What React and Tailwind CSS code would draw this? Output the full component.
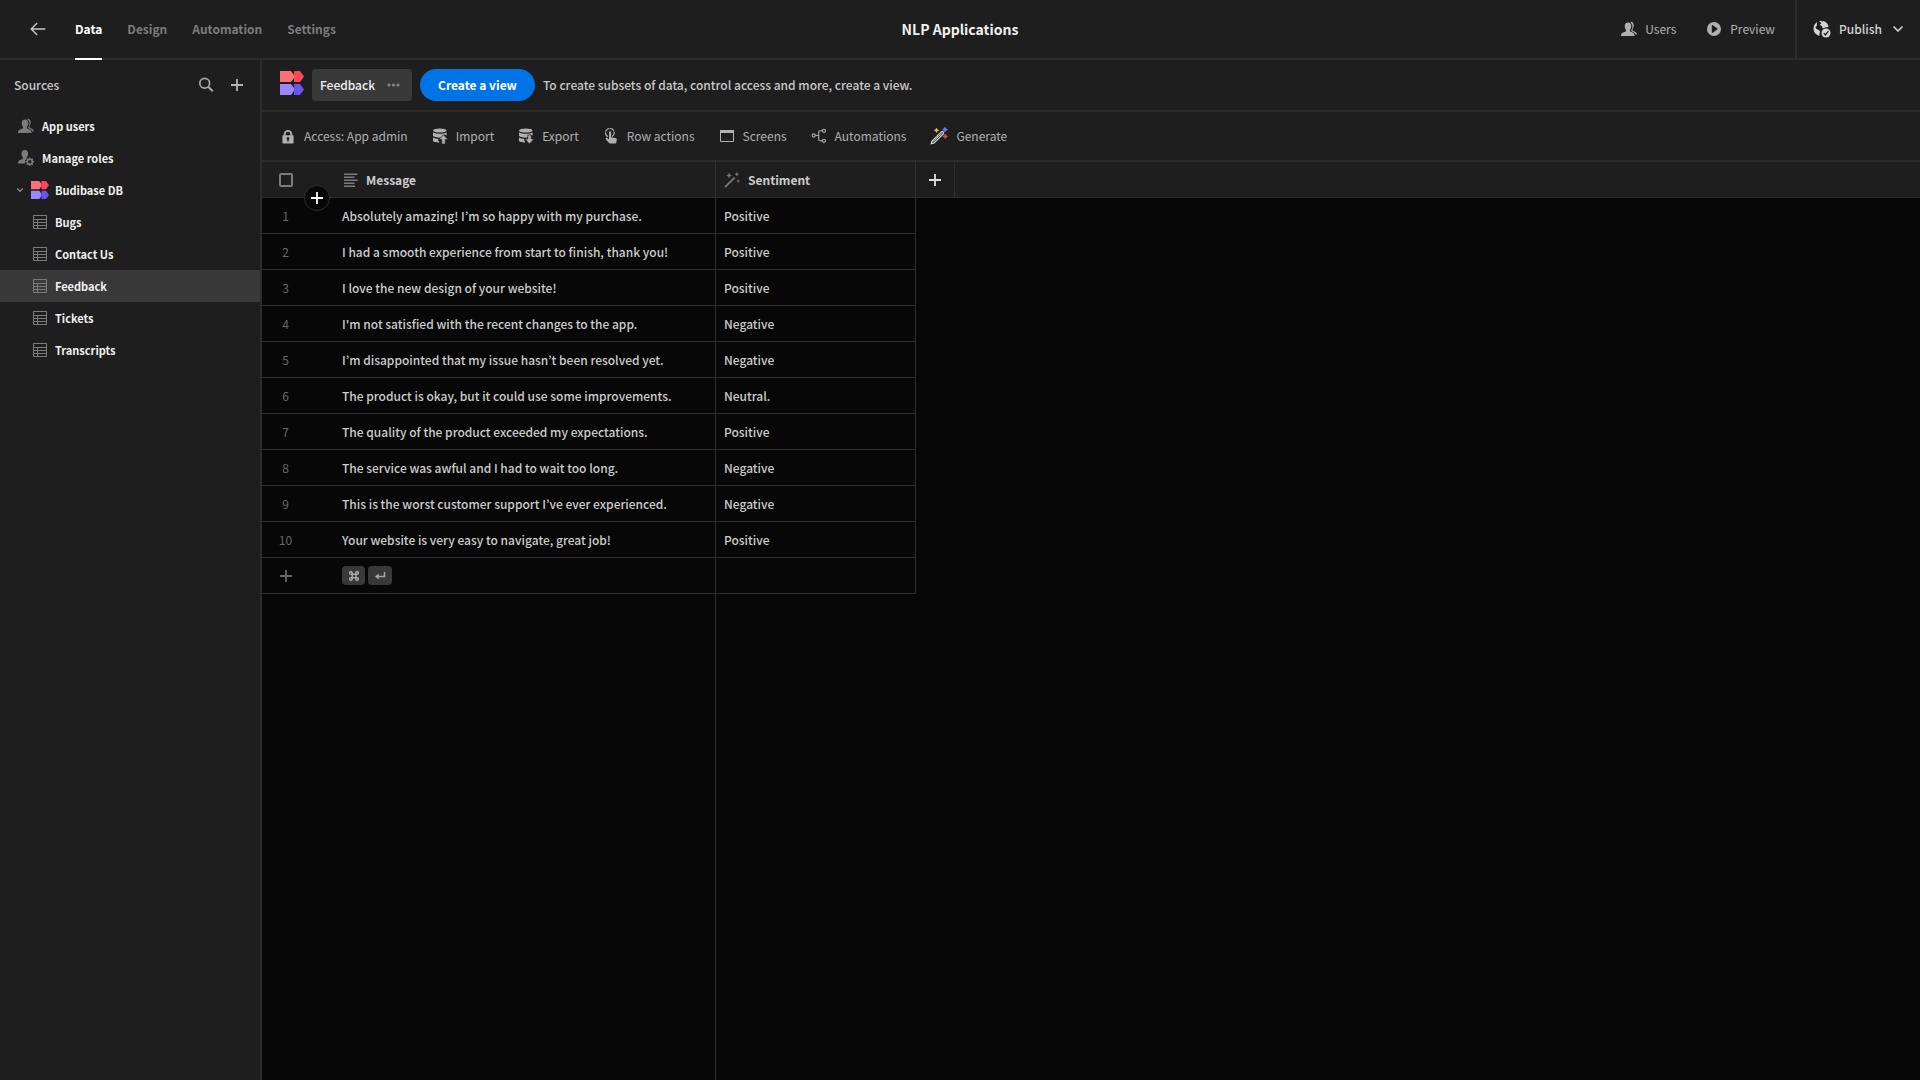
import { FiChevronDown } from "react-icons/fi";

const tabs = [
    { name: "Data", active: true },
    { name: "Design" },
    { name: "Automation" },
    { name: "Settings" }
];

const tables = [
    { name: "Bugs" },
    { name: "Contact Us" },
    { name: "Feedback", selected: true },
    { name: "Tickets" },
    { name: "Transcripts" }
];

const rows = [
    { message: "Absolutely amazing! I’m so happy with my purchase.", sentiment: "Positive" },
    { message: "I had a smooth experience from start to finish, thank you!", sentiment: "Positive" },
    { message: "I love the new design of your website!", sentiment: "Positive" },
    { message: "I'm not satisfied with the recent changes to the app.", sentiment: "Negative" },
    { message: "I’m disappointed that my issue hasn’t been resolved yet.", sentiment: "Negative" },
    { message: "The product is okay, but it could use some improvements.", sentiment: "Neutral." },
    { message: "The quality of the product exceeded my expectations.", sentiment: "Positive" },
    { message: "The service was awful and I had to wait too long.", sentiment: "Negative" },
    { message: "This is the worst customer support I’ve ever experienced.", sentiment: "Negative" },
    { message: "Your website is very easy to navigate, great job!", sentiment: "Positive" }
];

const Logo = ({ className }) => (
    <svg viewBox="0 0 24 24" className={className} aria-hidden="true">
        <path d="M0 0h11l3 4v3l-3 4H0z" fill="#ff6f76" />
        <path d="M14 0h6l4 5.500L20 11h-6z" fill="#fb4756" />
        <path d="M0 13h11l3 4v3l-3 4H0z" fill="#9b87fa" />
        <path d="M14 13h6l4 5.500L20 24h-6z" fill="#6a55ee" />
    </svg>
);

const BackIcon = () => (
    <svg viewBox="0 0 16 14" className="w-4 h-3.5" fill="none" stroke="currentColor" strokeWidth="1.400">
        <path d="M15.300 7H1.200M7.200 1L1.200 7l6 6" />
    </svg>
);

const SearchIcon = () => (
    <svg viewBox="0 0 16 16" className="w-4 h-4" fill="none" stroke="currentColor" strokeWidth="1.700">
        <circle cx="6.700" cy="6.200" r="4.900" />
        <path d="M10.200 9.700l4.600 4.600" strokeWidth="2" />
    </svg>
);

const PlusIcon = ({ className }) => (
    <svg viewBox="0 0 12 12" className={className} fill="currentColor">
        <path d="M5.100 0h1.800v5.100H12v1.800H6.900V12H5.100V6.900H0V5.100h5.100z" />
    </svg>
);

const UsersIcon = () => (
    <svg viewBox="0 0 16 16" className="w-4 h-4 shrink-0" fill="currentColor">
        <path d="M7 1.500c2.200 0 3.300 1.700 3.300 3.800 0 1.500-.6 2.700-1.300 3.500v1.300c0 .4.300.6.700.7 2.200.6 3.800 1.500 3.800 3.500v.6H0v-.6c0-2 1.900-2.900 4.200-3.500.4-.1.700-.3.700-.7V8.800C4.200 8 3.700 6.800 3.700 5.300 3.700 3.200 4.800 1.500 7 1.500z" />
        <path d="M9 .9c2.400-.5 3.700 1.100 3.700 3.600 0 1.500-.5 2.600-1.200 3.400v1.200c0 .4.200.6.700.8 2 .6 3.500 1.400 3.800 3.500h-1.500c-.5-1.600-1.800-2.400-3.700-3-.4-.1-.7-.4-.7-.8 1-1.200 1.300-2.500 1.300-4C11.400 3.600 10.600 1.800 9 .9z" />
    </svg>
);

const RolesIcon = () => (
    <svg viewBox="0 0 16 16" className="w-4 h-4 shrink-0" fill="currentColor">
        <path d="M6.800 0C9 0 10.100 1.700 10.100 3.700c0 1.500-.6 2.600-1.300 3.400v1.200c-1 .9-1.800 2-1.800 3.700 0 .6.100 1 .3 1.500H0V13c0-2.100 1.900-3.100 4.100-3.700.4-.1.700-.3.700-.7V7.100c-.7-.8-1.300-1.900-1.300-3.400C3.500 1.700 4.600 0 6.800 0z" />
        <circle cx="11.800" cy="11.800" r="2.500" fill="none" stroke="currentColor" strokeWidth="1.500" />
        <path d="M11.800 7.600v1.800M11.800 14.200V16M7.600 11.800h1.800M14.200 11.800H16M8.800 8.800l1.300 1.300M13.500 13.500l1.300 1.300M14.800 8.800l-1.300 1.300M10.100 13.500l-1.300 1.300" stroke="currentColor" strokeWidth="1.400" />
    </svg>
);

const TableIcon = () => (
    <svg viewBox="0 0 14 14" className="w-3.5 h-3.5 shrink-0" fill="none" stroke="currentColor">
        <path d="M.5.5h13v13H.5zM.5 4.500h13M.5 7.500h13M.5 10.500h13M4.500 4.500v9" />
    </svg>
);

const PreviewIcon = () => (
    <svg viewBox="0 0 16 16" className="w-4 h-4" fill="currentColor" fillRule="evenodd">
        <path d="M8 1a7 7 0 100 14A7 7 0 008 1zM5.800 4.400c0-.4.300-.5.600-.3l5.100 3.500c.3.200.3.500 0 .7l-5.100 3.600c-.3.200-.6.100-.6-.3z" />
    </svg>
);

const PublishIcon = () => (
    <svg viewBox="0 0 18 18" className="w-4.5 h-4.5">
        <path fill="currentColor" d="M4.200 2.100C1.900 3.400.5 5.800.5 8.500c0 3.600 2.500 6.600 6.100 7.300 0-1.600-.3-2.400.3-3.500.4-.9-.4-1.600-1.300-2.300-1.100-.8-2.700-1-3-2.300-.2-.9.6-1.200 1.100-1.700.6-.6 0-1.400.2-2.100z" />
        <path fill="currentColor" d="M6.200 1.300l2.200-.8c-.2.700.2 1 .9.900l1.300-.5c2.700.8 4.700 3.300 5 6.100l-2.500.3c-1.500.2-2.200 1.400-3.400.8-1-.5-.2-1.600-1-2.200-.7-.5-1.900-.4-1.900-1.300 0-.8 1.300-.7 1.500-1.400.1-.7-1.300-.7-2.100-1.900z" />
        <circle cx="13" cy="13" r="4.500" fill="currentColor" />
        <path d="M10.700 13.100l1.700 1.800 3-3.700" fill="none" stroke="#1e1e1e" strokeWidth="1.300" />
    </svg>
);

const LockIcon = () => (
    <svg viewBox="0 0 16 16" className="w-4 h-4" fill="currentColor" fillRule="evenodd">
        <path d="M13 7.300h-.7V6.200a4.300 4.300 0 00-8.600 0v1.100H3a.6.6 0 00-.6.600v6.900c0 .3.300.6.6.6h10c.3 0 .6-.3.600-.6V7.900a.6.600 0 00-.6-.6zM5.600 6.200a2.400 2.400 0 014.800 0v1.100H5.600zm3.100 5.500v1.800H7.300v-1.800a1.400 1.400 0 111.400 0z" />
    </svg>
);

const DatabaseIcon = ({ down }) => (
    <svg viewBox="0 0 16 16" className="w-4 h-4" fill="currentColor">
        <ellipse cx="7.800" cy="2.500" rx="6.800" ry="2.100" />
        <path d="M1 4.200c1.700 1.100 4.200 1.500 6.800 1.500s5.100-.4 6.800-1.500v3.400L12 6.400 8.600 9.700C5.500 9.700 2.700 9.200 1 8z" />
        <path d="M1 9.400c1.300.8 3 1.200 5.700 1.300l-.8 1.400 1.600 2.300C4 14.300 1 13.800 1 12.700z" />
        {down ? (
            <path d="M9.800 7h3.400v4h2.700l-4.400 4.900L7.100 11h2.700z" stroke="#1e1e1e" strokeWidth=".6" />
        ) : (
            <path d="M11.500 6.700l4.500 4.800h-2.800V16H9.800v-4.500H7z" stroke="#1e1e1e" strokeWidth=".6" />
        )}
    </svg>
);

const TouchIcon = () => (
    <svg viewBox="0 0 16 16" className="w-4 h-4" fill="currentColor">
        <path d="M5 8.600a4.300 4.300 0 113.900-.1" fill="none" stroke="currentColor" strokeWidth="1.200" strokeDasharray="5 .7" />
        <path d="M6 4.300c0-1.500 2.100-1.500 2.100 0v4.900l4.400.8c1 .2 1.400.9 1.300 1.700l-.5 2.700c-.1.700-.5 1.100-1.200 1.100H7.200c-.6 0-1-.3-1.400-.8l-3-3.500c-.6-1 .5-1.900 1.400-1.200L6 11.400z" />
    </svg>
);

const ScreenIcon = () => (
    <svg viewBox="0 0 16 16" className="w-4 h-4">
        <path d="M1.500 2.500h13v11h-13z" fill="none" stroke="currentColor" />
        <path d="M1 2h14v3H1z" fill="currentColor" />
    </svg>
);

const FlowIcon = () => (
    <svg viewBox="0 0 16 16" className="w-4 h-4" fill="none" stroke="currentColor" strokeWidth="1.100">
        <circle cx="2.700" cy="7.500" r="1.600" />
        <circle cx="12.900" cy="2.800" r="1.600" />
        <circle cx="12.900" cy="12.800" r="1.600" />
        <path d="M4.300 7.500h3.400M11.300 2.800H9.200c-1 0-1.500.5-1.500 1.500v7c0 1 .5 1.500 1.500 1.500h2.100" />
    </svg>
);

const GenerateIcon = () => (
    <svg viewBox="0 0 18 18" className="w-4.5 h-4.5">
        <path d="M2 14.200L11.300 4.900c1.300-1 3 .6 2 1.900L3.800 16.100l-2.500.5z" fill="none" stroke="#d0d0d0" strokeWidth="1.300" />
        <path d="M3.300 14.700l8.400-8.400" stroke="#d0d0d0" strokeWidth=".8" />
        <path d="M6.500 1l.8 1.500 1.500.8-1.500.8-.8 1.500-.8-1.500-1.500-.8 1.500-.8z" fill="#e0c63c" stroke="#e0c63c" strokeWidth=".5" />
        <path d="M15 0l.9 1.600 1.600.9-1.600.9L15 5l-.9-1.600-1.600-.9 1.600-.9z" fill="#6d7ff5" stroke="#6d7ff5" strokeWidth=".5" />
        <path d="M15.200 7l.9 1.500 1.500.9-1.500.9-.9 1.500-.9-1.500-1.500-.9 1.500-.9z" fill="#e8503c" stroke="#e8503c" strokeWidth=".5" />
    </svg>
);

const WandIcon = () => (
    <svg viewBox="0 0 16 16" className="w-4 h-4 shrink-0" fill="currentColor">
        <path d="M1 15.200L10.600 5.600" stroke="currentColor" strokeWidth="1.700" />
        <path d="M5 1l.7 1.800 1.800.7-1.800.7L5 6l-.7-1.800-1.800-.7 1.800-.7zM12.800.3l.6 1.300 1.300.6-1.300.6-.6 1.300-.6-1.300-1.300-.6 1.300-.6zM14.200 7.500l.5 1 .9.500-.9.500-.5 1-.5-1-.9-.5.9-.5z" stroke="currentColor" strokeWidth=".3" />
    </svg>
);

const TextIcon = () => (
    <svg viewBox="0 0 16 16" className="w-4 h-4 shrink-0" fill="currentColor">
        <path d="M2 1.500h13.500V3H2zM2 4.500h10.500V6H2zM2 7.500h13.500V9H2zM2 10.500h10.500V12H2zM2 13.500h11V15H2z" />
    </svg>
);

const actions = [
    { name: "Access: App admin", icon: <LockIcon /> },
    { name: "Import", icon: <DatabaseIcon /> },
    { name: "Export", icon: <DatabaseIcon down /> },
    { name: "Row actions", icon: <TouchIcon /> },
    { name: "Screens", icon: <ScreenIcon /> },
    { name: "Automations", icon: <FlowIcon /> },
    { name: "Generate", icon: <GenerateIcon /> }
];

const TopBar = () => (
    <header className="grid grid-cols-[1fr_auto_1fr] h-15 border-b-2 border-[#2c2c2c]">
        <div className="flex items-center pl-[30px]">
            <a href="#apps" aria-label="Back to apps" className="text-[#c8c8c8]">
                <BackIcon />
            </a>
            <nav className="flex gap-[25px] ml-[29px] self-stretch -mb-0.5">
                {tabs.map((tab) => (
                    <a
                        key={tab.name}
                        href={`#${tab.name.toLowerCase()}`}
                        className={
                            tab.active
                                ? "flex items-center font-bold text-white border-b-2 border-white"
                                : "flex items-center font-bold text-[#7c7c7c] border-b-2 border-transparent"
                        }
                    >
                        {tab.name}
                    </a>
                ))}
            </nav>
        </div>
        <h1 className="self-center text-[14px] font-bold text-[#f0f0f0]">NLP Applications</h1>
        <div className="flex justify-end">
            <div className="flex items-center gap-[30px] pr-5 text-[#b0b0b0]">
                <button type="button" className="flex items-center gap-2">
                    <UsersIcon />
                    Users
                </button>
                <button type="button" className="flex items-center gap-2">
                    <PreviewIcon />
                    Preview
                </button>
            </div>
            <button type="button" className="flex items-center gap-2 pl-4 pr-[14px] border-l-2 border-[#2c2c2c] font-medium text-[#d4d4d4]">
                <PublishIcon />
                Publish
                <FiChevronDown className="w-4 h-4" strokeWidth={2.5} />
            </button>
        </div>
    </header>
);

const Sidebar = () => (
    <aside className="w-[262px] shrink-0 border-r-2 border-[#2c2c2c]">
        <div className="flex items-center h-[50px] pl-[14px] pr-[17px] text-[#c8c8c8]">
            <h2 className="flex-1 font-medium">Sources</h2>
            <button type="button" aria-label="Search sources" className="mr-[17px] text-[#a8a8a8]">
                <SearchIcon />
            </button>
            <button type="button" aria-label="Add source" className="text-[#b4b4b4]">
                <PlusIcon className="w-3 h-3" />
            </button>
        </div>
        <nav className="text-[11px] font-bold text-[#f0f0f0]">
            <a href="#users" className="flex items-center gap-2 h-8 pl-[18px]">
                <span className="text-[#7c7c7c]"><UsersIcon /></span>
                App users
            </a>
            <a href="#roles" className="flex items-center gap-2 h-8 pl-[18px]">
                <span className="text-[#7c7c7c]"><RolesIcon /></span>
                Manage roles
            </a>
            <a href="#db" className="flex items-center h-8 pl-[15px]">
                <FiChevronDown className="w-2.5 h-2.5 mr-1.5 text-[#8a8a8a]" strokeWidth={3} />
                <Logo className="w-[18px] h-[18px] mr-1.5" />
                Budibase DB
            </a>
            {tables.map((table) => (
                <a
                    key={table.name}
                    href={`#${table.name}`}
                    className={
                        table.selected
                            ? "flex items-center gap-2 h-8 pl-[33px] bg-[#393939]"
                            : "flex items-center gap-2 h-8 pl-[33px]"
                    }
                >
                    <span className="text-[#7c7c7c]"><TableIcon /></span>
                    {table.name}
                </a>
            ))}
        </nav>
    </aside>
);

const Grid = () => (
    <div className="flex flex-col flex-1 bg-[#070707]">
        <table className="w-full table-fixed border-separate border-spacing-0 text-left font-medium text-[#cccccc]">
            <colgroup>
                <col className="w-[72px]" />
                <col className="w-[382px]" />
                <col className="w-[200px]" />
                <col className="w-[39px]" />
                <col />
            </colgroup>
            <thead className="bg-[#1e1e1e] font-bold">
                <tr className="h-9">
                    <th className="relative pl-[17px] border-b border-[#2e2e2e]">
                        <input
                            type="checkbox"
                            aria-label="Select all rows"
                            className="block appearance-none w-3.5 h-3.5 border-2 border-[#7c7c7c] rounded-xs"
                        />
                        <button
                            type="button"
                            aria-label="Insert row"
                            className="absolute -bottom-3.5 right-1 flex items-center justify-center w-[26px] h-[26px] rounded-full bg-[#070707] border border-[#2e2e2e] text-white"
                        >
                            <PlusIcon className="w-3 h-3" />
                        </button>
                    </th>
                    <th className="px-2 border-b border-r border-[#2e2e2e]">
                        <div className="flex items-center gap-2">
                            <span className="text-[#7c7c7c]"><TextIcon /></span>
                            Message
                        </div>
                    </th>
                    <th className="px-2 border-b border-r border-[#2e2e2e]">
                        <div className="flex items-center gap-2">
                            <span className="text-[#7c7c7c]"><WandIcon /></span>
                            Sentiment
                        </div>
                    </th>
                    <th className="border-b border-r border-[#2e2e2e]">
                        <button type="button" aria-label="Add column" className="block mx-auto text-[#e0e0e0]">
                            <PlusIcon className="w-3 h-3" />
                        </button>
                    </th>
                    <th className="border-b border-[#2e2e2e]"></th>
                </tr>
            </thead>
            <tbody>
                {rows.map((row, index) => (
                    <tr key={index} className="h-9">
                        <td className="pr-[25px] text-center font-normal text-[#6a6a6a] border-b border-[#2e2e2e]">{index + 1}</td>
                        <td className="px-2 truncate border-b border-r border-[#2e2e2e]">{row.message}</td>
                        <td className="px-2 truncate border-b border-r border-[#2e2e2e]">{row.sentiment}</td>
                    </tr>
                ))}
                <tr className="h-9">
                    <td className="pr-[25px] border-b border-[#2e2e2e]">
                        <button type="button" aria-label="Add row" className="block mx-auto text-[#6a6a6a]">
                            <PlusIcon className="w-3 h-3" />
                        </button>
                    </td>
                    <td className="px-2 border-b border-r border-[#2e2e2e]">
                        <div className="flex gap-[3px] text-[#a8a8a8]">
                            <kbd className="flex items-center justify-center w-[23px] h-[19px] rounded-sm bg-[#393939]">
                                <svg viewBox="0 0 12 12" className="w-3 h-3" fill="none" stroke="currentColor" strokeWidth="1.500">
                                    <path d="M4.200 4.200h3.600v3.600H4.200zM4.200 4.200H2.900a1.300 1.300 0 111.300-1.300zM7.800 4.200V2.900a1.300 1.300 0 111.300 1.300zM7.800 7.800h1.300a1.300 1.300 0 11-1.300 1.300zM4.200 7.800v1.300a1.300 1.300 0 11-1.300-1.300z" />
                                </svg>
                            </kbd>
                            <kbd className="flex items-center justify-center w-6 h-[19px] rounded-sm bg-[#393939]">
                                <svg viewBox="0 0 12 12" className="w-3 h-3" fill="none" stroke="currentColor" strokeWidth="1.500">
                                    <path d="M10.500 2v4.500H2.500" />
                                    <path d="M4.800 3.400v6.200L1 6.500z" fill="currentColor" stroke="none" />
                                </svg>
                            </kbd>
                        </div>
                    </td>
                    <td className="border-b border-r border-[#2e2e2e]"></td>
                </tr>
            </tbody>
        </table>
        <div className="flex-1 w-[454px] border-r border-[#2e2e2e]"></div>
    </div>
);

const App = () => (
    <div className="flex flex-col min-h-screen bg-[#1e1e1e] font-['Noto_Sans_CJK_KR',sans-serif] text-[12px] leading-5">
        <TopBar />
        <div className="flex flex-1">
            <Sidebar />
            <main className="flex flex-col flex-1 min-w-0">
                <div className="flex items-center gap-2 h-[52px] pl-[18px] border-b-2 border-[#2c2c2c]">
                    <Logo className="w-6 h-6 mb-1" />
                    <button type="button" className="flex items-center gap-3 h-8 pl-2 pr-3 rounded-sm bg-[#393939] font-medium text-[#f0f0f0]">
                        Feedback
                        <svg viewBox="0 0 13 4" className="w-[13px] h-1" fill="#8a8a8a">
                            <circle cx="2" cy="2" r="1.500" />
                            <circle cx="6.500" cy="2" r="1.500" />
                            <circle cx="11" cy="2" r="1.500" />
                        </svg>
                    </button>
                    <button type="button" className="h-8 px-[18px] rounded-full bg-[#0073e6] font-bold text-white">
                        Create a view
                    </button>
                    <p className="font-medium text-[#c8c8c8]">
                        To create subsets of data, control access and more, create a view.
                    </p>
                </div>
                <div className="flex items-center gap-6 h-[50px] pl-[18px] border-b-2 border-[#2c2c2c] text-[#b0b0b0]">
                    {actions.map((action) => (
                        <button key={action.name} type="button" className="flex items-center gap-2">
                            {action.icon}
                            {action.name}
                        </button>
                    ))}
                </div>
                <Grid />
            </main>
        </div>
    </div>
);

export default App;
